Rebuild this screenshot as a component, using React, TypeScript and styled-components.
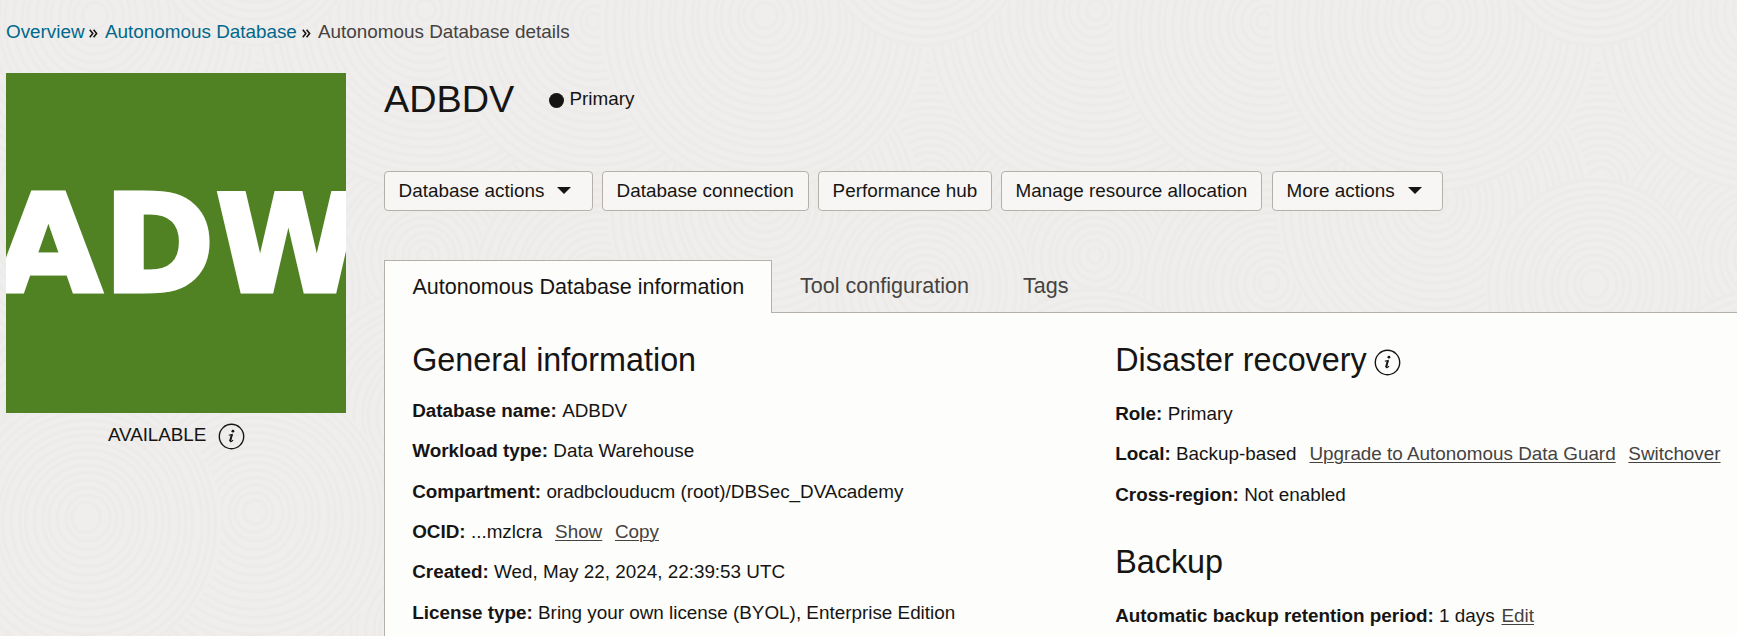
import React from 'react';
import styled, { createGlobalStyle } from 'styled-components';

const GlobalStyle = createGlobalStyle`
  * { box-sizing: border-box; }
  body {
    margin: 0;
    background: #efeeec;
    color: #161513;
    font-family: "Liberation Sans", Arial, sans-serif;
    font-size: 18.86px;
    line-height: 24px;
  }
  h1, h2, p { margin: 0; font-weight: 400; }
`;

const Page = styled.div`
  position: relative;
  width: 1737px;
  height: 636px;
  overflow: hidden;
  display: flex;
  flex-direction: column;
`;

const Backdrop = styled.svg`
  position: absolute;
  inset: 0;
  width: 100%;
  height: 100%;
  z-index: -1;
`;

const Breadcrumbs = styled.nav`
  display: flex;
  align-items: center;
  height: 73px;
  padding: 0 0 10px 6px;
  white-space: nowrap;
`;

const Crumb = styled.a<{ $current?: boolean; $width: number }>`
  width: ${p => p.$width}px;
  color: ${p => (p.$current ? '#45423f' : '#00688c')};
  text-decoration: none;
`;

const CrumbArrow = styled.svg`
  width: 9px;
  height: 9px;
  margin: 3px 7px 0 4px;
`;

const Body = styled.div`
  flex: 1;
  display: flex;
  min-height: 0;
`;

const Side = styled.aside`
  flex: none;
  width: 384px;
  padding-left: 6px;
`;

const Tile = styled.svg`
  display: block;
  width: 340px;
  height: 340px;
  background: #508223;
`;

const TileText = styled.text`
  font-family: "DejaVu Sans", Verdana, sans-serif;
  font-weight: 700;
  font-size: 134px;
  fill: #fff;
  stroke: #fff;
  stroke-width: 5px;
`;

const Status = styled.div`
  display: flex;
  align-items: center;
  width: 340px;
  padding: 6px 0 0 102px;
  gap: 12px;
`;

const StatusText = styled.span`
  font-size: 18.86px;
  letter-spacing: -0.08px;
  padding-top: 1px;
`;

const Main = styled.main`
  flex: 1;
  min-width: 0;
  display: flex;
  flex-direction: column;
`;

const TitleRow = styled.header`
  display: flex;
  align-items: center;
  height: 52px;
`;

const Title = styled.h1`
  width: 165px;
  font-size: 37.8px;
  line-height: 51px;
  padding-top: 1px;
`;

const Dot = styled.i`
  width: 15px;
  height: 15px;
  margin-top: 2px;
  border-radius: 50%;
  background: #161513;
`;

const RoleText = styled.span`
  margin: -1px 0 0 5.5px;
`;

const Actions = styled.div`
  display: flex;
  gap: 9px;
  margin-top: 46px;
`;

const ActionButton = styled.button<{ $width: number }>`
  width: ${p => p.$width}px;
  height: 40px;
  display: flex;
  align-items: center;
  gap: 13px;
  padding: 0 0 1px 13.6px;
  border: 1px solid #b5b1aa;
  border-radius: 4px;
  background: #f7f6f5;
  color: #161513;
  font: inherit;
  white-space: nowrap;
`;

const LastAction = styled(ActionButton)`
  margin-left: 1px;
`;

const Caret = styled.i`
  border: 7px solid transparent;
  border-top-color: #161513;
  border-bottom: 0;
`;

const TabBar = styled.div`
  display: flex;
  height: 53px;
  margin-top: 49px;
  position: relative;
  z-index: 1;
`;

const Tab = styled.div<{ $active?: boolean; $width?: number }>`
  width: ${p => (p.$width ? `${p.$width}px` : 'auto')};
  flex: ${p => (p.$width ? 'none' : 1)};
  height: 53px;
  padding-left: ${p => (p.$active ? 27.5 : 28)}px;
  border: solid #b5b1aa;
  border-width: ${p => (p.$active ? '1px 1px 0' : '0 0 1px')};
  background: ${p => (p.$active ? '#fdfdfb' : 'transparent')};
  color: ${p => (p.$active ? '#161513' : '#45423f')};
  font-size: 21.55px;
  line-height: 51.9px;
  white-space: nowrap;
`;

const Panel = styled.section`
  flex: 1;
  display: flex;
  padding: 29px 0 0 27.2px;
  border-left: 1px solid #b5b1aa;
  background: #fdfdfb;
`;

const Column = styled.div<{ $width: number }>`
  flex: none;
  width: ${p => p.$width}px;
  white-space: nowrap;
`;

const Heading = styled.h2`
  display: flex;
  align-items: center;
  gap: 7px;
  height: 36px;
  font-size: 32.35px;
`;

const Facts = styled.div<{ $top: number }>`
  display: grid;
  grid-auto-rows: 40.4px;
  align-items: center;
  padding-top: ${p => p.$top}px;
`;

const Fact = styled.p`
  display: flex;
  gap: 5.3px;
`;

const Label = styled.b`
  font-weight: 700;
`;

const Value = styled.span`
  margin-right: 7.6px;
`;

const TextLink = styled.a<{ $tight?: boolean }>`
  margin: 0 ${p => (p.$tight ? 0 : 7.4)}px 0 ${p => (p.$tight ? -6 : 0)}px;
  color: #45423f;
  text-decoration: underline;
  text-decoration-thickness: 1px;
  text-underline-offset: 2px;
`;

const Round = styled.svg`
  flex: none;
  width: 27px;
  height: 27px;
  margin-top: 4px;
`;

const InfoIcon = () => (
  <Round viewBox="0 0 27 27" fill="none" stroke="#161513">
    <circle cx="13.5" cy="13.5" r="12.2" strokeWidth="1.4" />
    <circle cx="14.9" cy="8.2" r="1.4" fill="#161513" stroke="none" />
    <path d="M10.8 12.2l3.4-.8-1.9 6.4c-.2.8.2 1.1.9.7l1.9-1.3" strokeWidth="1.1" />
    <path d="M13.8 11.8l-1.8 6.4" strokeWidth="1.9" />
  </Round>
);

const Arrow = () => (
  <CrumbArrow viewBox="0 0 9 9" fill="none" stroke="#161513" strokeWidth="1.6">
    <path d="M.8.8l3 3.7-3 3.7M4.6.8l3 3.7-3 3.7" />
  </CrumbArrow>
);

// Overlapping fans of the page texture: centre x, centre y, radius.
const fans: [number, number, number][] = [
  [255, 320, 180], [590, 400, 170], [425, 640, 190], [90, 690, 170], [260, 190, 150],
  [425, 265, 160], [600, 290, 130], [95, 210, 158], [255, 290, 110],
  [425, 20, 170], [595, 30, 152], [95, 25, 165], [255, -60, 105],
  [425, 420, 130], [590, 560, 150], [255, 520, 140], [87, 525, 135],
];
const GAP = 8;
const rings = (r: number) =>
  Array.from({ length: Math.floor(r / GAP) }, (_, i) => r - i * GAP).filter(q => q > 5);

const Texture = () => (
  <Backdrop>
    <defs>
      <pattern id="texture" width="670" height="670" patternUnits="userSpaceOnUse">
        <rect width="670" height="670" fill="#efeeec" />
        {fans.map(([x, y, r], n) =>
          [-670, 0, 670].map(dx => (
            <g key={`${n}:${dx}`} fill="none" stroke="#ecebe9" strokeWidth="3">
              <ellipse cx={x + dx} cy={y} rx={r} ry={r} fill="#efeeec" stroke="none" />
              {rings(r).map((q, i) => (
                <ellipse key={q} cx={x + dx + (i % 3) - 1} cy={y - i * 0.5} rx={q * 0.96} ry={q} />
              ))}
            </g>
          ))
        )}
      </pattern>
    </defs>
    <rect width="100%" height="100%" fill="url(#texture)" />
  </Backdrop>
);

export default function App() {
  return (
    <Page>
      <GlobalStyle />
      <Texture />
      <Breadcrumbs>
        <Crumb $width={79}>Overview</Crumb>
        <Arrow />
        <Crumb $width={193}>Autonomous Database</Crumb>
        <Arrow />
        <Crumb $current $width={260}>Autonomous Database details</Crumb>
      </Breadcrumbs>
      <Body>
        <Side>
          <Tile viewBox="0 0 340 340">
            <TileText transform="translate(-10.5 217.5) scale(1.02 1)">A</TileText>
            <TileText transform="translate(98.3 217.5) scale(.986 1)">D</TileText>
            <TileText transform="translate(210 217.5) scale(.98 1)">W</TileText>
          </Tile>
          <Status>
            <StatusText>AVAILABLE</StatusText>
            <InfoIcon />
          </Status>
        </Side>
        <Main>
          <TitleRow>
            <Title>ADBDV</Title>
            <Dot />
            <RoleText>Primary</RoleText>
          </TitleRow>
          <Actions>
            <ActionButton $width={209}>Database actions<Caret /></ActionButton>
            <ActionButton $width={207}>Database connection</ActionButton>
            <ActionButton $width={174}>Performance hub</ActionButton>
            <ActionButton $width={261}>Manage resource allocation</ActionButton>
            <LastAction $width={171}>More actions<Caret /></LastAction>
          </Actions>
          <TabBar>
            <Tab $active $width={388}>Autonomous Database information</Tab>
            <Tab $width={223}>Tool configuration</Tab>
            <Tab>Tags</Tab>
          </TabBar>
          <Panel>
            <Column $width={703}>
              <Heading>General information</Heading>
              <Facts $top={12.6}>
                <Fact><Label>Database name:</Label><Value>ADBDV</Value></Fact>
                <Fact><Label>Workload type:</Label><Value>Data Warehouse</Value></Fact>
                <Fact><Label>Compartment:</Label><Value>oradbclouducm (root)/DBSec_DVAcademy</Value></Fact>
                <Fact><Label>OCID:</Label><Value>...mzlcra</Value><TextLink>Show</TextLink><TextLink>Copy</TextLink></Fact>
                <Fact><Label>Created:</Label><Value>Wed, May 22, 2024, 22:39:53 UTC</Value></Fact>
                <Fact><Label>License type:</Label><Value>Bring your own license (BYOL), Enterprise Edition</Value></Fact>
              </Facts>
            </Column>
            <Column $width={620}>
              <Heading>Disaster recovery<InfoIcon /></Heading>
              <Facts $top={15.7}>
                <Fact><Label>Role:</Label><Value>Primary</Value></Fact>
                <Fact><Label>Local:</Label><Value>Backup-based</Value><TextLink>Upgrade to Autonomous Data Guard</TextLink><TextLink>Switchover</TextLink></Fact>
                <Fact><Label>Cross-region:</Label><Value>Not enabled</Value></Fact>
              </Facts>
              <Facts $top={27.2}>
                <Heading>Backup</Heading>
              </Facts>
              <Facts $top={13.5}>
                <Fact><Label>Automatic backup retention period:</Label><Value>1 days</Value><TextLink $tight>Edit</TextLink></Fact>
              </Facts>
            </Column>
          </Panel>
        </Main>
      </Body>
    </Page>
  );
}
